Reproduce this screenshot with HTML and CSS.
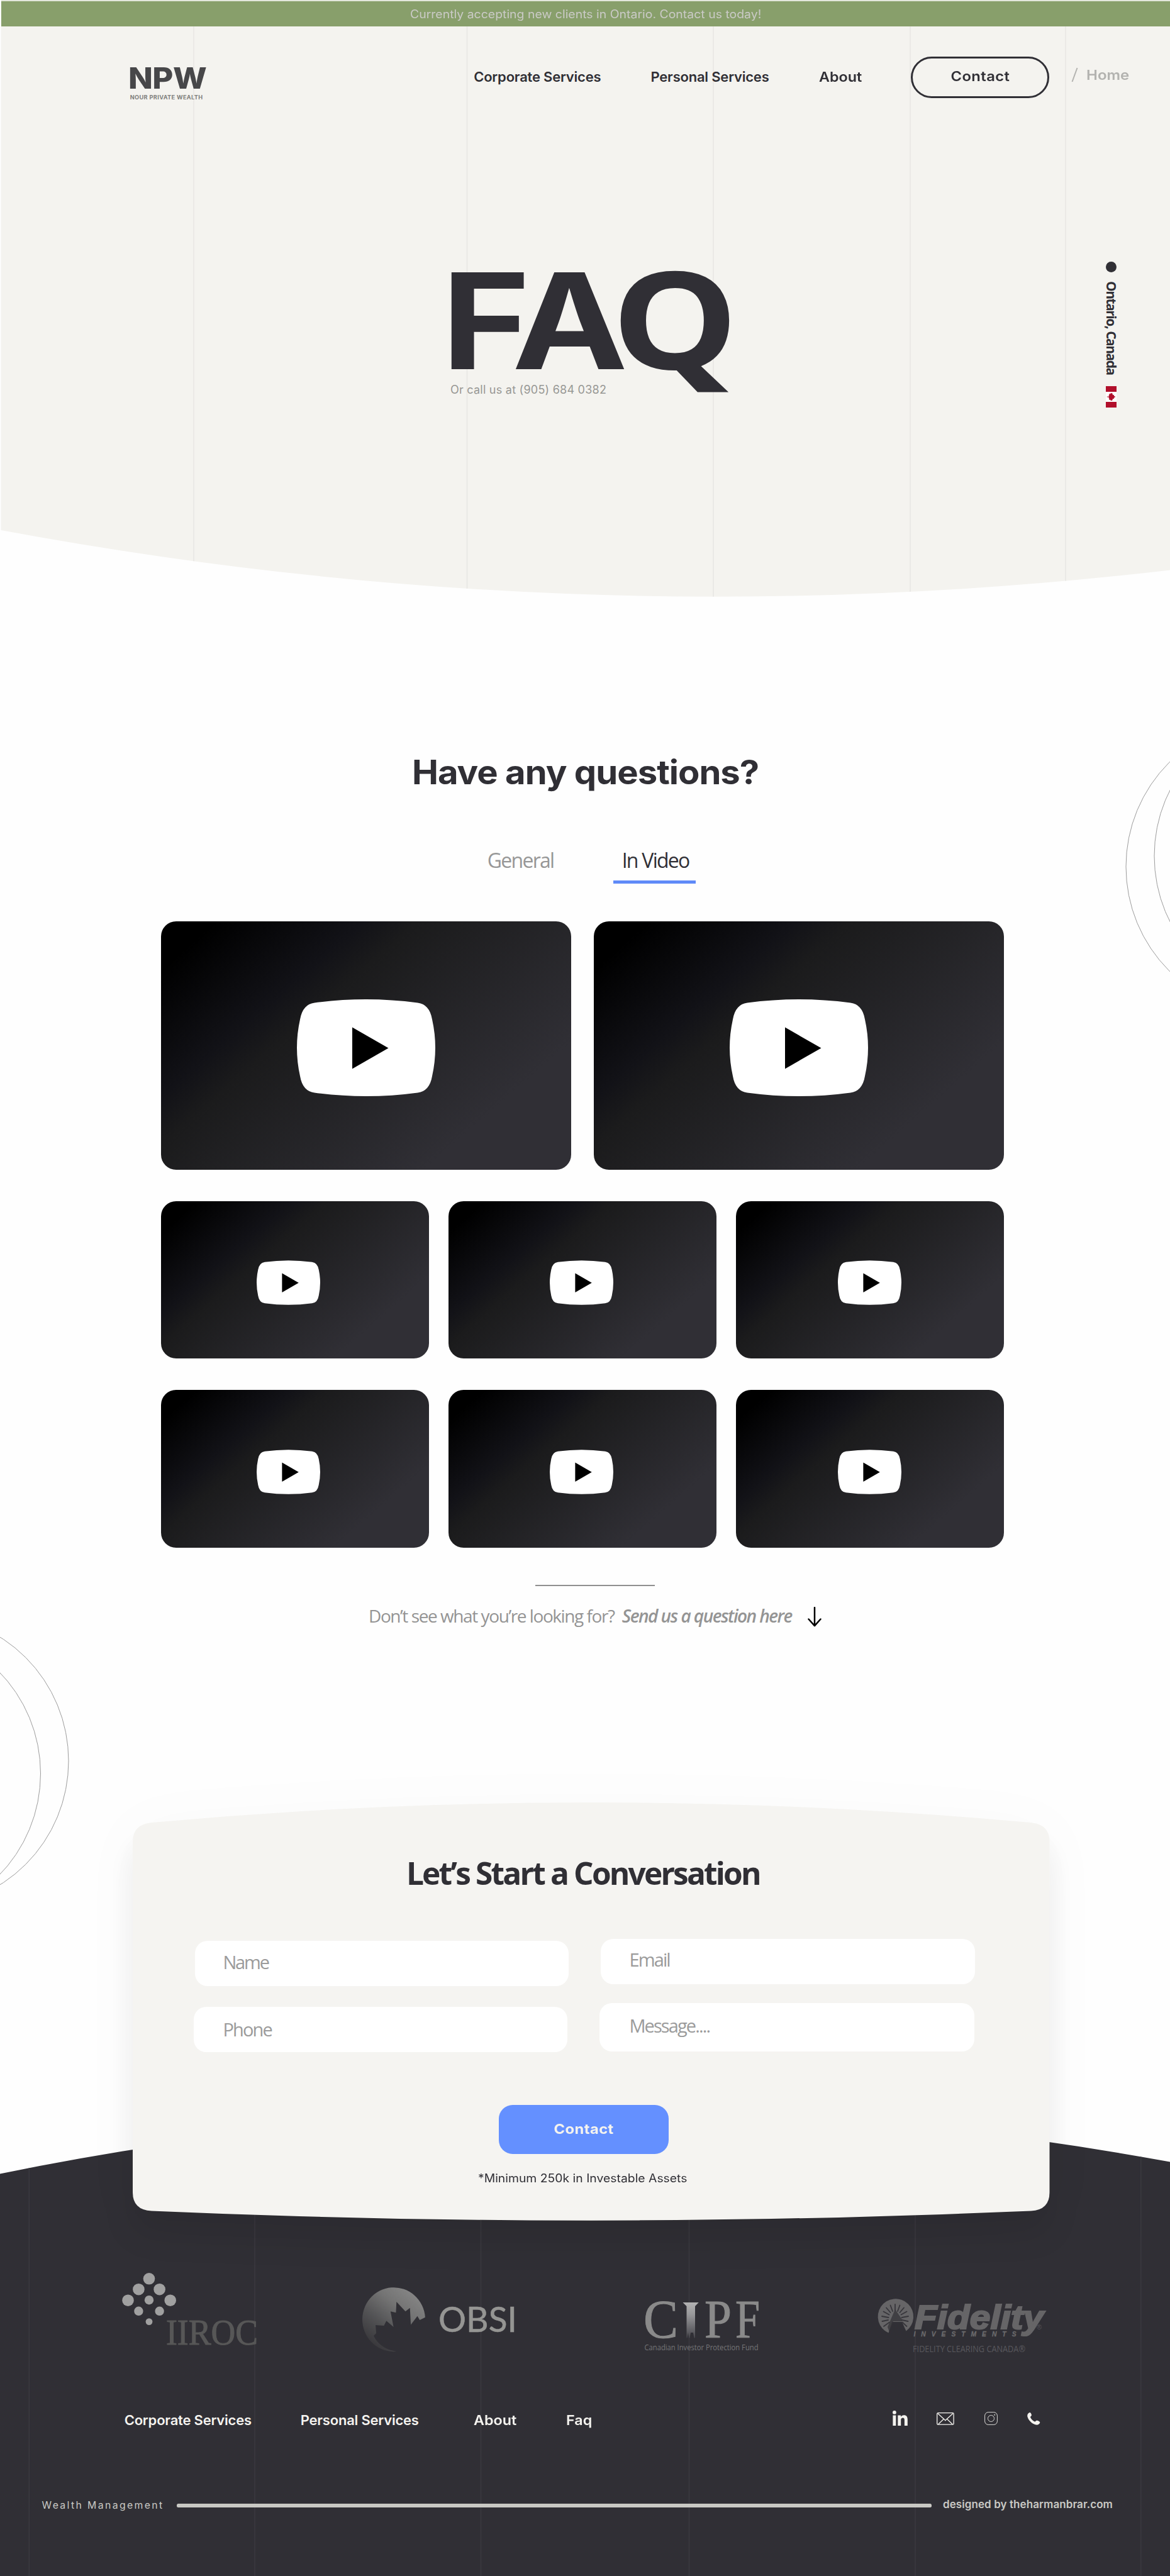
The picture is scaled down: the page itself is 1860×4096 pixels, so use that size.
FILE: index.html
```html
<!DOCTYPE html>
<html lang="en">
<head>
<meta charset="utf-8">
<title>FAQ – Nour Private Wealth</title>
<link rel="stylesheet" href="styles.css">
</head>
<body>
<svg class="defs" width="0" height="0" aria-hidden="true">
  <symbol id="play" viewBox="0 0 220 154">
    <path fill="#fff" d="M28 5.500Q110-5.500 192 5.500Q211 8 215 32Q225 77 215 122Q211 146 192 148.500Q110 159.500 28 148.500Q9 146 5 122Q-5 77 5 32Q9 8 28 5.500Z"/>
    <path fill="#000" d="M88 44.500V110.500L145.500 77.500Z"/>
  </symbol>
</svg>

<div class="page">
  <header class="hero">
    <svg class="hero-bg" viewBox="0 0 1860 949" aria-hidden="true">
      <defs><clipPath id="heroClip"><path d="M1.500 0H1860V906.500Q930 1015.500 1.500 843Z"/></clipPath></defs>
      <g clip-path="url(#heroClip)">
        <rect width="1860" height="1020" fill="#f4f3ef"/>
        <path d="M308 0V949M742.500 0V949M1134 0V949M1447 0V949M1694 0V949" stroke="#e7e6e3" stroke-width="1.500"/>
      </g>
    </svg>
    <div class="banner"><span class="banner-text">Currently accepting new clients in Ontario. Contact us today!</span></div>
    <div class="topbar">
      <div class="logo">
        <div class="logo-name">NPW</div>
        <div class="logo-sub">NOUR PRIVATE WEALTH</div>
      </div>
      <a class="nav-link nav-long">Corporate Services</a>
      <a class="nav-link nav-long">Personal Services</a>
      <a class="nav-link nav-short">About</a>
      <a class="nav-button"><span class="button-text">Contact</span></a>
      <div class="crumb">
        <svg class="crumb-slash" viewBox="0 0 11 24"><path d="M1.500 23L9.500 1" stroke="#b3b3b0" stroke-width="2" fill="none"/></svg>
        <span class="crumb-text">Home</span>
      </div>
    </div>
    <div class="hero-body">
      <div class="hero-copy">
        <h1 class="hero-title"><span class="ltr-f">F</span><span class="ltr-a">A</span><span class="ltr-q">Q</span></h1>
        <p class="hero-phone">Or call us at (905) 684 0382</p>
      </div>
      <div class="place">
        <span class="place-dot"></span>
        <span class="place-name">Ontario, Canada</span>
        <svg class="flag" viewBox="0 0 17 34">
          <rect width="17" height="34" fill="#fff"/>
          <path fill="#b10f2b" d="M0 0H17V9H0ZM0 25H17V34H0Z"/>
          <path fill="#b10f2b" d="M15.500 17L12.800 18.600L13.200 20.500L11.600 19.800L11 20.600L9.800 23.400L9 22.500L7.500 23.300L7.600 21.800L5 21.800L5.500 20L4.600 19L4.700 17.400H1.800V16.600H4.700L4.600 15L5.500 14L5 12.200L7.600 12.200L7.500 10.700L9 11.500L9.800 10.600L11 13.400L11.600 14.200L13.200 13.500L12.800 15.400Z"/>
        </svg>
      </div>
    </div>
  </header>

  <svg class="rings rings-right" viewBox="0 0 80 350" aria-hidden="true"><g fill="none" stroke="#9c9c9c"><circle cx="244" cy="177" r="234"/><circle cx="287" cy="160" r="232"/></g></svg>
  <svg class="rings rings-left" viewBox="0 0 120 420" aria-hidden="true"><g fill="none" stroke="#9c9c9c"><circle cx="-123.500" cy="210" r="232.500"/><circle cx="-167" cy="230" r="231.500"/></g></svg>

  <main class="faq">
    <h2 class="faq-title">Have any questions?</h2>
    <div class="tabs">
      <a class="tab">General</a>
      <a class="tab tab-active">In Video</a>
    </div>
    <div class="videos videos-large">
      <div class="video"><svg class="play"><use href="#play"/></svg></div>
      <div class="video"><svg class="play"><use href="#play"/></svg></div>
    </div>
    <div class="videos videos-small">
      <div class="video"><svg class="play"><use href="#play"/></svg></div>
      <div class="video"><svg class="play"><use href="#play"/></svg></div>
      <div class="video"><svg class="play"><use href="#play"/></svg></div>
      <div class="video"><svg class="play"><use href="#play"/></svg></div>
      <div class="video"><svg class="play"><use href="#play"/></svg></div>
      <div class="video"><svg class="play"><use href="#play"/></svg></div>
    </div>
    <hr class="rule">
    <div class="ask">
      <span class="ask-lead">Don’t see what you’re looking for?</span>
      <a class="ask-link">Send us a question here</a>
      <svg class="ask-arrow" viewBox="0 0 22 32"><path d="M11 1V30M1.500 19.500L11 30.200L20.500 19.500" fill="none" stroke="#000" stroke-width="2.500" stroke-linecap="round" stroke-linejoin="round"/></svg>
    </div>
  </main>

  <section class="contact">
    <svg class="contact-bg" viewBox="0 0 1458 665" aria-hidden="true">
      <path fill="#f5f4f1" d="M30 32Q729-32 1428 32Q1457.500 35 1457.500 62V620Q1457.500 648 1428 649.500Q729 680 30 649.500Q0 648 0 620V62Q0 35 30 32Z"/>
    </svg>
    <h2 class="contact-title">Let’s Start a Conversation</h2>
    <form class="fields">
      <div class="col col-left">
        <input class="field field-name" placeholder="Name">
        <input class="field field-phone" placeholder="Phone">
      </div>
      <div class="col col-right">
        <input class="field field-email" placeholder="Email">
        <input class="field field-message" placeholder="Message....">
      </div>
    </form>
    <a class="submit"><span class="button-text">Contact</span></a>
    <p class="minimum">*Minimum 250k in Investable Assets</p>
  </section>

  <footer class="footer">
    <svg class="footer-bg" viewBox="0 0 1860 756" aria-hidden="true">
      <defs><clipPath id="footClip"><path d="M0 116.500Q930-73.300 1860 97.500V756H0Z"/></clipPath></defs>
      <g clip-path="url(#footClip)">
        <rect width="1860" height="756" fill="#302f35"/>
        <path d="M46.300 0V756M405 0V756M764.500 0V756M1095.500 0V756M1455 0V756M1813.700 0V756" stroke="#3b3a40" stroke-width="1.500"/>
      </g>
    </svg>
    <div class="partners">
      <svg class="partner" width="225" height="140" viewBox="190 3610 225 140">
        <g fill="#a0a0a0">
          <circle cx="237" cy="3623.300" r="9.300"/><circle cx="220.400" cy="3640.200" r="9.300"/><circle cx="253.600" cy="3640.200" r="9.300"/>
          <circle cx="203.500" cy="3657.700" r="9.300"/><circle cx="237" cy="3657.200" r="7.200"/><circle cx="270.700" cy="3657.700" r="9.300"/>
          <circle cx="220.400" cy="3674.800" r="7.200"/><circle cx="253.600" cy="3674.800" r="7.200"/><circle cx="237" cy="3691.600" r="5.400"/>
        </g>
        <text class="t-iiroc" x="264" y="3728" textLength="146" lengthAdjust="spacingAndGlyphs">IIROC</text>
      </svg>
      <svg class="partner" width="255" height="140" viewBox="570 3610 255 140">
        <defs><linearGradient id="moon" x1=".85" y1=".1" x2=".2" y2=".95"><stop offset="0" stop-color="#858585"/><stop offset=".3" stop-color="#747474"/><stop offset=".65" stop-color="#525254"/><stop offset="1" stop-color="#37363a"/></linearGradient></defs>
        <path fill="url(#moon)" d="M675.900 3684.700A50 51 0 1 0 630 3739C612 3736 600 3727 594 3714L598 3710L597 3697L610.400 3698L614.200 3690.200L625.600 3700L620.800 3675.300L629.400 3677.300L630.300 3659.900L644.500 3675.300L651.700 3669.800L653.100 3696.500L663.500 3682.800L667.300 3689.100Z"/>
        <text class="t-obsi" x="697" y="3708.400" textLength="125" lengthAdjust="spacingAndGlyphs">OBSI</text>
      </svg>
      <svg class="partner" width="195" height="140" viewBox="1018 3610 195 140">
        <defs><linearGradient id="column" gradientUnits="userSpaceOnUse" x1="0" y1="3660" x2="0" y2="3718"><stop offset="0" stop-color="#b4b4b4"/><stop offset=".35" stop-color="#98989a"/><stop offset="1" stop-color="#45444a"/></linearGradient></defs>
        <text class="t-cipf" x="1023" y="3717" textLength="55" lengthAdjust="spacingAndGlyphs">C</text>
        <path fill="url(#column)" d="M1085.500 3661H1110.800L1105 3667V3717.500H1103.500L1102 3709H1098L1096.500 3717.500H1095L1094 3709L1092.500 3717.500H1091.500V3667Z"/>
        <text class="t-cipf" x="1120" y="3717" textLength="43" lengthAdjust="spacingAndGlyphs">P</text>
        <text class="t-cipf" x="1169" y="3717" textLength="39" lengthAdjust="spacingAndGlyphs">F</text>
        <text class="t-cipf-sub" x="1024.500" y="3737.300" textLength="181" lengthAdjust="spacingAndGlyphs">Canadian Investor Protection Fund</text>
      </svg>
      <svg class="partner" width="280" height="140" viewBox="1388 3610 280 140">
        <path fill="#666567" d="M1412.500 3709.500A28.300 28.300 0 1 1 1440.500 3706.500L1434 3692H1418Z"/>
        <g stroke="#37363b" stroke-width="1.800" stroke-linecap="round">
          <path d="M1423 3664V3674M1415.500 3665.500L1419 3675M1430.500 3665.500L1427 3675M1409 3669.500L1415.500 3677M1437 3669.500L1430.500 3677M1404.500 3675.500L1413.500 3680.500M1441.500 3675.500L1432.500 3680.500M1402 3683L1412.500 3685M1444 3683L1433.500 3685M1402.500 3691L1412 3689M1443.500 3691L1434 3689M1405 3699L1414 3692.500M1441.500 3699L1434.500 3692.500"/>
        </g>
        <path fill="#37363b" d="M1423 3672L1434 3688V3691H1428L1420 3691L1413.500 3707L1411 3700Z" opacity=".8"/>
        <text class="t-fid" x="1454" y="3702.800" textLength="205" lengthAdjust="spacingAndGlyphs">Fidelity</text>
        <text class="t-inv" x="1452.500" y="3714.700" textLength="163" lengthAdjust="spacing">INVESTMENTS</text>
        <text class="t-reg" x="1648" y="3704">®</text>
        <text class="t-clear" x="1451" y="3740.400" textLength="179" lengthAdjust="spacingAndGlyphs">FIDELITY CLEARING CANADA®</text>
      </svg>
    </div>
    <div class="footer-nav">
      <a class="nav-link nav-long">Corporate Services</a>
      <a class="nav-link nav-long">Personal Services</a>
      <a class="nav-link nav-short">About</a>
      <a class="nav-link nav-short">Faq</a>
      <svg width="24" height="25" viewBox="0 0 24 25" fill="#f4f3ef"><circle cx="2.900" cy="2.900" r="2.900"/><path d="M.4 7.600H5.300V24H.4ZM8.300 7.600H13V9.800C14 8.100 15.800 7.200 18 7.200C22 7.200 23.800 9.800 23.800 14V24H18.900V15C18.900 12.800 18.200 11.500 16.300 11.500C14.300 11.500 13.200 12.900 13.200 15V24H8.300Z"/></svg>
      <svg width="28" height="20" viewBox="0 0 28 20" fill="none" stroke="#f4f3ef" stroke-width="1.300"><rect x=".7" y=".7" width="26.400" height="18.500" rx="1.600"/><path d="M1.800 1.400L12.200 10.900L13.900 12.700L15.600 10.900L26 1.400M2.500 18.800L11.200 10.500M25.300 18.800L16.600 10.500"/></svg>
      <svg width="21" height="21" viewBox="0 0 21 21" fill="none" stroke="#d9d8d5" stroke-width="1"><rect x=".6" y=".6" width="19.800" height="19.800" rx="5.500"/><circle cx="10.500" cy="10.500" r="5"/><circle cx="16.200" cy="4.800" r=".7" fill="#d9d8d5" stroke-width=".6"/></svg>
      <svg width="21" height="20" viewBox="0 0 21 20" fill="#f4f3ef"><path d="M3.400.3C4.800-.4 5.700.6 6.500 2.600C7.300 4.600 7 5.300 5.600 6.300C4.900 6.900 4.900 7.500 5.600 8.700C7 11 9 12.900 11.400 14.200C12.300 14.700 12.900 14.500 13.500 13.700C14.300 12.600 15 12.300 16.700 13.100C18.800 14 20.700 14.800 20.200 16.200C19.400 18.600 16.600 20.200 13.700 19.500C7.500 18 2.200 12.800.5 7C-.4 4 .9 1.500 3.400.3Z"/></svg>
    </div>
    <div class="closing">
      <span class="closing-name">Wealth Management</span>
      <span class="closing-bar"></span>
      <span class="closing-credit">designed by theharmanbrar.com</span>
    </div>
  </footer>
</div>
</body>
</html>
```
FILE: styles.css
```css
* { box-sizing: border-box; }
body { margin: 0; background: #fff; font-family: Inter, sans-serif; color: #302f35; }
h1, h2, p { margin: 0; }
svg { display: block; flex: none; }
.defs { position: absolute; }

.page { position: relative; width: 1860px; height: 4096px; overflow: hidden; background: #fefefe; }

/* Hero */
.hero { position: relative; height: 949px; }
.hero-bg { position: absolute; left: 0; top: 0; width: 1860px; height: 949px; }
.hero > div { position: relative; }
.banner {
  height: 41.5px; margin-left: 1.5px; border-top: 2px solid #e3e7dc; background: #889f6b;
  color: #cacac6; font-size: 18px; line-height: 41px;
  padding-left: 650.5px; white-space: nowrap;
}
.banner-text { display: inline-block; transform: scaleX(1.08); transform-origin: left; }
.topbar {
  display: grid; align-items: center; height: 66px; margin-top: 48px; padding-left: 205.700px;
  grid-template-columns: 547.500px 281.300px 267.900px 145.600px 220.400px 34.600px auto;
  grid-template-rows: 66px;
}
.logo { align-self: start; margin-top: 11.300px; white-space: nowrap; }
.logo-name { height: 46px; margin-left: -2px; font-size: 46px; font-weight: 800; line-height: 46px; letter-spacing: -0.5px; color: #474749; transform: scaleX(1.105); transform-origin: left; }
.logo-sub { margin: 2px 0 0 1px; font-size: 9.200px; font-weight: 700; line-height: 12px; letter-spacing: 0.360px; color: #7f7f7c; }
.nav-link { font-size: 22px; font-weight: 600; line-height: 30px; white-space: nowrap; padding-bottom: 2px; }
.nav-long { letter-spacing: -0.210px; }
.nav-short { transform: scaleX(1.06); transform-origin: left; }
.nav-button {
  height: 66px; border: 3.500px solid #302f35; border-radius: 33px; text-align: center;
  font-size: 22px; font-weight: 600; line-height: 57px;
}
.button-text { display: inline-block; transform: scaleX(1.08); letter-spacing: 0.400px; }
.crumb { grid-column: 7; display: flex; gap: 13.500px; padding-bottom: 8px; color: #b3b3b0; font-size: 22px; font-weight: 600; line-height: 24px; }
.crumb-text { transform: scaleX(1.09); transform-origin: left; }
.crumb-slash { width: 11px; height: 24px; }
.hero-body { display: flex; justify-content: space-between; margin-top: 249px; padding: 0 85px 0 717px; }
.hero-title { display: flex; align-items: baseline; height: 211px; margin: -6.700px 0 6.700px; font-size: 211px; line-height: 211px; font-weight: 700; }
.hero-title span { display: block; transform-origin: left; }
.ltr-f { width: 112.800px; margin-left: -15.500px; transform: scaleX(1.137); }
.ltr-a { width: 158px; transform: scaleX(1.169); }
.ltr-q { width: 180px; font-family: "Open Sans", sans-serif; font-size: 215px; transform: scaleX(1.180); }
.hero-phone { margin: -7.500px 0 0 -1px; font-size: 18px; line-height: 24px; letter-spacing: 0.240px; color: #979794; }
.place { display: flex; flex-direction: column; align-items: center; width: 17px; margin-top: 11px; }
.place-dot { width: 17px; height: 17px; border-radius: 50%; background: #302f35; }
.place-name {
  height: 149px; margin: 14px 0 18px; writing-mode: vertical-rl; white-space: nowrap;
  font: 700 21px/17px "Open Sans", sans-serif; letter-spacing: -1.500px;
}
.flag { width: 17px; height: 34px; }

/* Decorative rings cropped by the page edges */
.rings { position: absolute; }
.rings-right { right: 0; top: 1201px; width: 80px; height: 350px; }
.rings-left { left: 0; top: 2590px; width: 120px; height: 420px; }

/* Video FAQ */
.faq { padding: 248.500px 264px 0 256px; }
.faq-title { width: 700px; margin-left: 398.500px; font-size: 53.500px; line-height: 60px; letter-spacing: -0.950px; white-space: nowrap; transform: scaleX(1.050); transform-origin: left; }
.tabs { display: flex; margin-top: 88px; padding-left: 518.800px; font-family: "Open Sans", sans-serif; font-size: 32px; line-height: 44px; letter-spacing: -1.750px; }
.tab { width: 200.200px; height: 59.200px; color: #979797; white-space: nowrap; }
.tab-active { width: 130.600px; padding-left: 13.700px; border-bottom: 5px solid #5f8af8; color: #302f35; }
.videos { display: grid; }
.videos-large { grid-template-columns: repeat(2, 652px); gap: 36px; margin-top: 60.200px; }
.videos-small { grid-template-columns: repeat(3, 426.300px); gap: 50px 30.500px; margin-top: 49.500px; }
.video {
  display: flex; align-items: center; justify-content: center; border-radius: 24px;
  background: linear-gradient(139deg, #000 8%, #121217 29%, #1b1b1c 37%, #302f35 79%);
}
.videos-large .video { height: 395.500px; padding-top: 6px; }
.videos-small .video { height: 250.600px; padding-top: 8.500px; }
.videos-small .video:nth-child(3n+1) { padding-right: 21px; }
.videos-small .video:nth-child(3n+2) { padding-right: 3.500px; }
.play { width: 220px; height: 154px; }
.videos-small .play { width: 101px; height: 71px; }
.rule { width: 190px; height: 2px; margin: 58.500px 0 0 594.800px; border: 0; background: #8f8f8f; }
.ask { display: flex; align-items: center; height: 38px; margin-top: 28.700px; padding-left: 330px; font: 400 28px/38px "Open Sans", sans-serif; color: #949494; white-space: nowrap; }
.ask-lead { width: 402.800px; letter-spacing: -1.430px; }
.ask-link { width: 294.900px; font-style: italic; font-weight: 600; letter-spacing: -1.540px; }
.ask-arrow { width: 22px; height: 32px; margin-top: 3px; }

/* Contact card, overlapping the footer */
.contact { position: relative; z-index: 1; width: 1458px; height: 665px; margin: 278px 0 0 210.900px; padding-top: 82px; }
.contact-bg { position: absolute; left: 0; top: 0; width: 1458px; height: 665px; overflow: visible; filter: drop-shadow(0 36px 24px rgba(0,0,0,.075)) drop-shadow(0 10px 45px rgba(0,0,0,.02)); }
.contact > :not(.contact-bg) { position: relative; }
.contact-title { padding-left: 435px; font: 700 49.600px/60px "Open Sans", sans-serif; letter-spacing: -2.820px; white-space: nowrap; }
.fields { display: flex; padding-left: 99.300px; }
.col { display: flex; flex-direction: column; width: 594.300px; }
.col-left { margin-top: 77.800px; }
.col-right { margin: 75px 0 0 51px; }
.field { display: block; width: 100%; border: 0; border-radius: 20px; background: #fff; font: 400 29px "Open Sans", sans-serif; }
.field::placeholder { color: #9b9b9b; opacity: 1; }
.field-name { height: 71.500px; padding: 0 0 4px 44.300px; letter-spacing: -2.200px; }
.field-phone { height: 72px; margin: 33px 0 0 -2.400px; padding: 0 0 1px 46.700px; letter-spacing: -1.870px; }
.field-email { height: 71.700px; padding: 0 0 8px 44.900px; letter-spacing: -1.850px; }
.field-message { width: 596.300px; height: 77px; margin: 30.300px 0 0 -2.500px; padding: 0 0 6.500px 47.400px; letter-spacing: -1.900px; }
.submit {
  display: block; width: 270.500px; height: 77.300px; margin: 84.800px 0 0 582.100px; border-radius: 22px;
  background: #6490ff; color: #f4f3ef; text-align: center; font-size: 22px; font-weight: 700; line-height: 77.300px;
}
.minimum { width: 400px; margin: 27.700px 0 0 549.600px; font-size: 18px; line-height: 24px; white-space: nowrap; transform: scaleX(1.075); transform-origin: left; }

/* Footer */
.footer { position: relative; height: 756px; margin-top: -191px; padding-top: 270px; }
.footer-bg { position: absolute; left: 0; top: 0; width: 1860px; height: 756px; }
.footer > div { position: relative; }
.partners { display: flex; padding-left: 190px; height: 140px; }
.partner { overflow: visible; }
.partner:nth-child(2) { margin-left: 155px; }
.partner:nth-child(3) { margin-left: 193px; }
.partner:nth-child(4) { margin-left: 175px; }
.t-iiroc { font: 400 57px "Liberation Serif", serif; fill: #575757; stroke: #575757; stroke-width: 1px; }
.t-obsi { font: 400 57px Lato, sans-serif; fill: #959593; stroke: #959593; stroke-width: 0.6px; }
.t-cipf { font: 400 86px "Liberation Serif", serif; fill: #8a8a8a; stroke: #8a8a8a; stroke-width: 1px; }
.t-cipf-sub { font: 400 12.500px "Open Sans", sans-serif; fill: #757577; }
.t-fid { font: italic 700 53px "Liberation Sans", sans-serif; fill: #666567; stroke: #666567; stroke-width: 2.200px; }
.t-inv { font: italic 700 10.300px "Liberation Sans", sans-serif; fill: #6b6a6c; stroke: #6b6a6c; stroke-width: 0.3px; }
.t-reg { font: 400 11px "Liberation Sans", sans-serif; fill: #55545a; }
.t-clear { font: 400 13.800px "Open Sans", sans-serif; fill: #59585d; }
.footer-nav {
  display: grid; align-items: center; height: 30px; margin-top: 82.600px; padding-left: 197.700px; color: #f4f3ef;
  grid-template-columns: 280px 275.600px 146.700px 519px 70.400px 75.600px 68.200px auto;
}
.footer-nav .nav-link { padding-bottom: 0; }
.footer-nav svg { margin-bottom: 6px; }
.footer-nav svg ~ svg { margin-bottom: 5px; }
.closing { display: flex; align-items: center; height: 24px; margin-top: 109.200px; padding-left: 66.500px; color: #c9c9c4; line-height: 24px; white-space: nowrap; }
.closing-name { width: 214.500px; font-size: 15.800px; letter-spacing: 2.370px; }
.closing-bar { width: 1199.600px; height: 5.500px; border-radius: 2.500px; background: #c9c9c4; }
.closing-credit { margin-left: 18.400px; padding-bottom: 4px; font-size: 17px; font-weight: 600; letter-spacing: 0.080px; }
```
